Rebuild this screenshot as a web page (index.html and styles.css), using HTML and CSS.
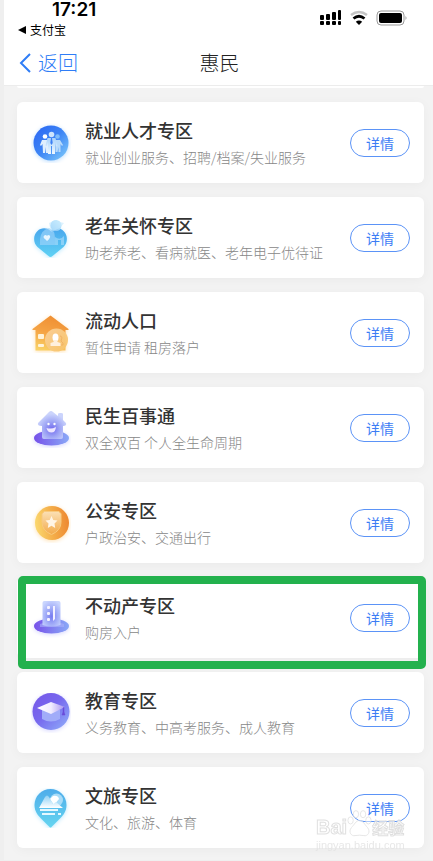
FILE: index.html
```html
<!DOCTYPE html>
<html lang="zh-CN">

<head>
  <meta charset="UTF-8">
  <meta name="viewport" content="width=device-width, initial-scale=1.0">
  <title>惠民</title>
  <link rel="stylesheet" href="styles.css">
</head>

<body>
  <div class="page">
    <header class="header">
      <div class="status-bar">
        <div class="status-left">
          <div class="time">17:21</div>
          <a class="back-app" href="#"><svg width="8" height="8" viewBox="0 0 8 8"><path d="M8 0v8L0 4z" fill="#000"/></svg>支付宝</a>
        </div>
        <svg class="status-icons" width="88" height="18" viewBox="0 0 88 18">
          <g fill="#000">
            <rect x="1" y="6" width="4" height="5" rx="1"/><rect x="7" y="5" width="4" height="6" rx="1"/>
            <rect x="13" y="3" width="4" height="8" rx="1"/><rect x="19" y="1" width="3" height="10" rx="1"/>
            <rect x="1" y="12" width="4" height="4" rx="1"/><rect x="7" y="12" width="4" height="4" rx="1"/>
            <rect x="13" y="12" width="4" height="4" rx="1"/><rect x="19" y="12" width="3" height="4" rx="1"/>
          </g>
          <path d="M32 6q8-6 16 0" fill="none" stroke="#c4c4c4" stroke-width="2.600"/>
          <path d="M34.500 9.500q5.500-4.500 11 0" fill="none" stroke="#000" stroke-width="2.800"/>
          <path d="M36.800 12.700q3.200-2.400 6.400 0L40 16z" fill="#000"/>
          <rect x="58" y="2" width="27" height="14" rx="4" fill="none" stroke="#999"/>
          <rect x="60" y="4" width="23" height="10" rx="2" fill="#000"/>
          <path d="M86.500 7q2 2 0 4z" fill="#999"/>
        </svg>
      </div>
      <nav class="nav">
        <a class="back" href="#"><svg width="12" height="20" viewBox="0 0 12 20"><path d="M11 1L2 10l9 9" fill="none" stroke="#2f7df6" stroke-width="2"/></svg>返回</a>
        <h1>惠民</h1>
      </nav>
    </header>

    <main class="list">
      <div class="card-edge"></div>

      <section class="card">
        <svg class="icon" viewBox="0 0 40 40">
          <defs>
            <linearGradient id="jobBg" x1="0" y1="0" x2="1" y2="1"><stop offset="0" stop-color="#2a64f3"/><stop offset=".5" stop-color="#3e86f5"/><stop offset="1" stop-color="#84d0fb"/></linearGradient>
            <linearGradient id="jobMan" x1="0" y1="0" x2="0" y2="1"><stop offset="0" stop-color="#a9d3fc"/><stop offset="1" stop-color="#f0f8ff"/></linearGradient>
          </defs>
          <circle class="glow-blue" cx="20" cy="20" r="17.500" fill="url(#jobBg)"/>
          <circle cx="14" cy="13.500" r="2.300" fill="#fff"/>
          <circle cx="26.500" cy="13.500" r="2.300" fill="#80bdfa"/>
          <path d="M11 17h6v13h-2v-6l-1 6h-2l-.5-9-1.500 2-1-1z" fill="#e0effe"/>
          <path d="M24 17h5l3 5-1 1-1.500-2v8h-2v-5l-1 5h-2z" fill="#b7dafb"/>
          <circle cx="20.500" cy="11.500" r="2.800" fill="#cde5fd"/>
          <path d="M16.500 15h8l2 8-1.500.5-1-4.500v12h-3v-8h-1v8h-3V19l-1 4-1.500-.5z" fill="url(#jobMan)"/>
          <path d="M20 15h1l.7 5-1.200 2-1.200-2z" fill="#3b7ff4"/>
        </svg>
        <div class="info">
          <h2>就业人才专区</h2>
          <p>就业创业服务、招聘/档案/失业服务</p>
        </div>
        <button class="btn" type="button">详情</button>
      </section>

      <section class="card">
        <svg class="icon" viewBox="0 0 40 40">
          <defs>
            <linearGradient id="heartBg" x1="0" y1="0" x2="0" y2="1"><stop offset="0" stop-color="#48a7ed"/><stop offset="1" stop-color="#60d2f4"/></linearGradient>
            <linearGradient id="heartTop" x1="1" y1="0" x2="0" y2="1"><stop offset="0" stop-color="#d4f2fe"/><stop offset="1" stop-color="#78bff5"/></linearGradient>
          </defs>
          <path class="glow-cyan" d="M19.500 13c4-4 10-3 13 0 5 5 4 12 0 16l-11 9q-2 2-4 0l-11-9c-4-4-5-11 0-16 3-3 9-4 13 0z" fill="url(#heartBg)"/>
          <circle cx="25" cy="7.500" r="5.500" fill="url(#heartTop)"/>
          <path d="M18 5l6-3 5 2 4 1-4 5-9 4z" fill="#c6eafd" opacity=".6"/>
          <path d="M9 27v-6q1-9 9-11 6 2 6 10v7z" fill="#9ed4fb" opacity=".65"/>
          <path d="M24 27v-8q5 4 9-1v9h-3v-5h-3v5z" fill="#aeddfc" opacity=".6"/>
          <path d="M15 17c-3 0-3 3-1 4l2 2c4-3 4-6 1-6l-1 1z" fill="#e8f6ff"/>
        </svg>
        <div class="info">
          <h2>老年关怀专区</h2>
          <p>助老养老、看病就医、老年电子优待证</p>
        </div>
        <button class="btn" type="button">详情</button>
      </section>

      <section class="card">
        <svg class="icon" viewBox="0 0 40 40">
          <defs>
            <linearGradient id="homeBg" x1=".6" y1="0" x2=".3" y2="1"><stop offset="0" stop-color="#ef8e32"/><stop offset=".5" stop-color="#f5a344"/><stop offset="1" stop-color="#f9d166"/></linearGradient>
            <linearGradient id="homeDot" x1="0" y1="0" x2="1" y2="1"><stop offset="0" stop-color="#fad19c"/><stop offset="1" stop-color="#f8c366"/></linearGradient>
          </defs>
          <path class="glow-orange" d="M19.500 2.500l18 13.500v1h-3v20.500h-30V17h-3v-1z" fill="url(#homeBg)"/>
          <rect x="7" y="21" width="6" height="5" rx="1" fill="#fff3d9"/><rect x="7" y="31" width="6" height="3" rx="1" fill="#fff3d9"/>
          <circle cx="25.500" cy="27" r="11.500" fill="url(#homeDot)" opacity=".95"/>
          <ellipse cx="24.500" cy="24.500" rx="3" ry="4" fill="#fff"/>
          <path d="M23 27h3l.5 2 3 1v3h-10v-3l3-1z" fill="#fff0dd"/>
          <path d="M29 23q3 0 1 5l2 2v2h-2" fill="none" stroke="#f0b165"/>
        </svg>
        <div class="info">
          <h2>流动人口</h2>
          <p>暂住申请 租房落户</p>
        </div>
        <button class="btn" type="button">详情</button>
      </section>

      <section class="card">
        <svg class="icon" viewBox="0 0 40 40">
          <defs>
            <linearGradient id="baseBg" x1="0" y1="0" x2="1" y2="0"><stop offset="0" stop-color="#7651e9"/><stop offset="1" stop-color="#8aa9f7"/></linearGradient>
            <radialGradient id="smileBg" cx=".5" cy=".65" r=".55"><stop offset="0" stop-color="#7068ee"/><stop offset=".5" stop-color="#9fa6f5"/><stop offset="1" stop-color="#cbd4fc"/></radialGradient>
          </defs>
          <ellipse class="glow-violet" cx="20.500" cy="30" rx="17.500" ry="7.500" fill="url(#baseBg)"/>
          <path d="M20 3q1 0 2 1l5 4V6q0-1 2-1h1q2 0 2 1v6l3 3q1 3-3 3v11q0 2-2 2H13q-2 0-2-2V18q-5 0-4-3L18 4q1-1 2-1z" fill="url(#smileBg)"/>
          <circle cx="17.500" cy="16" r="1.200" fill="#fff"/><circle cx="23.500" cy="16" r="1.200" fill="#fff"/>
          <path d="M15.500 20q5 1.500 9.500-1-.5 5.500-4.500 5.500T15.500 20z" fill="#eee7ff"/>
        </svg>
        <div class="info">
          <h2>民生百事通</h2>
          <p>双全双百 个人全生命周期</p>
        </div>
        <button class="btn" type="button">详情</button>
      </section>

      <section class="card">
        <svg class="icon" viewBox="0 0 40 40">
          <defs>
            <linearGradient id="policeBg" x1="0" y1=".5" x2="1" y2=".4"><stop offset="0" stop-color="#fbd86f"/><stop offset=".5" stop-color="#f4ad49"/><stop offset="1" stop-color="#ed8831"/></linearGradient>
            <linearGradient id="shield" x1="0" y1="0" x2="0" y2="1"><stop offset="0" stop-color="#fbe0b5"/><stop offset="1" stop-color="#f3aa4a"/></linearGradient>
          </defs>
          <circle class="glow-orange" cx="21" cy="20" r="17" fill="url(#policeBg)"/>
          <path d="M13 8.500h15q1 2 2 2v9q0 8-9.500 12-9.500-4-9.500-12v-9q1 0 2-2z" fill="url(#shield)" stroke="#f8ca7e"/>
          <path d="M20.500 13l1.800 4 4.200.5-3 3 .7 4.500-3.700-2.200-3.700 2.200.7-4.500-3-3 4.200-.5z" fill="#fff5e6"/>
        </svg>
        <div class="info">
          <h2>公安专区</h2>
          <p>户政治安、交通出行</p>
        </div>
        <button class="btn" type="button">详情</button>
      </section>

      <section class="card marked">
        <svg class="icon" viewBox="0 0 40 40">
          <defs>
            <radialGradient id="tower" cx=".5" cy=".6" r=".65"><stop offset="0" stop-color="#777bf0"/><stop offset=".5" stop-color="#a2adf8"/><stop offset="1" stop-color="#c9d5fe"/></radialGradient>
          </defs>
          <ellipse class="glow-violet" cx="20.500" cy="28" rx="17.500" ry="7.500" fill="url(#baseBg)"/>
          <path d="M9 26l3-1h18l3 1v3H9z" fill="#aab0fa" opacity=".6"/>
          <path d="M11.500 5q0-2 2-2h14q2 0 2 2v22q-9 3-18 0z" fill="url(#tower)"/>
          <g fill="#f4f2ff"><rect x="16" y="8" width="3" height="3" rx="1"/><rect x="16" y="14" width="3" height="3" rx="1"/><rect x="16" y="20" width="3" height="3" rx="1"/><path d="M22 8h2v13l-2 2z"/></g>
        </svg>
        <div class="info">
          <h2>不动产专区</h2>
          <p>购房入户</p>
        </div>
        <button class="btn" type="button">详情</button>
      </section>

      <section class="card">
        <svg class="icon" viewBox="0 0 40 40">
          <defs>
            <linearGradient id="eduBg" x1="0" y1="0" x2="1" y2="1"><stop offset="0" stop-color="#7657e8"/><stop offset=".45" stop-color="#7768ee"/><stop offset="1" stop-color="#91b1fa"/></linearGradient>
            <linearGradient id="cap" x1="0" y1="0" x2="1" y2="0"><stop offset="0" stop-color="#fff"/><stop offset=".5" stop-color="#f1edff"/><stop offset="1" stop-color="#a590ef"/></linearGradient>
          </defs>
          <circle class="glow-violet" cx="20" cy="18.500" r="18.500" fill="url(#eduBg)"/>
          <path d="M11 17h18v9q-9 5-18 0z" fill="#a1acf9"/>
          <path d="M6 15l14-6 14 5-14 7z" fill="url(#cap)"/>
          <path d="M32 15v4l-1 3h3l-1-3v-5" fill="#6a4bd9" stroke="#6a4bd9" stroke-width=".5"/>
        </svg>
        <div class="info">
          <h2>教育专区</h2>
          <p>义务教育、中高考服务、成人教育</p>
        </div>
        <button class="btn" type="button">详情</button>
      </section>

      <section class="card">
        <svg class="icon" viewBox="0 0 40 40">
          <defs>
            <linearGradient id="tourBg" x1="0" y1="0" x2="0" y2="1"><stop offset="0" stop-color="#4eacea"/><stop offset="1" stop-color="#65d5f0"/></linearGradient>
            <linearGradient id="hill" x1="0" y1="0" x2="0" y2="1"><stop offset="0" stop-color="#8ed0f5"/><stop offset="1" stop-color="#fff"/></linearGradient>
          </defs>
          <path class="glow-cyan" d="M19.500 1c9 0 16 7 16 16 0 6-3 10-7 14l-8 8q-1 1-2 0l-8-8c-4-4-7-8-7-14 0-9 7-16 16-16z" fill="url(#tourBg)"/>
          <circle cx="25.500" cy="12" r="6.500" fill="#a8dcf8"/>
          <path d="M19 11l3-3q5-1 6 3l-5 6z" fill="#fff"/>
          <path d="M8 20l6-11q2-3 4 0l4 7 3-2 7 6z" fill="url(#hill)"/>
          <path d="M9 22h18M11 26h13M27 26h3" fill="none" stroke="#e5f8ff" stroke-width="2"/>
        </svg>
        <div class="info">
          <h2>文旅专区</h2>
          <p>文化、旅游、体育</p>
        </div>
        <button class="btn" type="button">详情</button>
        <div class="watermark">
          <div class="watermark-logo">
            <span>Bai</span>
            <svg width="25" height="30" viewBox="0 0 28 32">
              <g fill="#fff" fill-opacity=".6" stroke="#dcdcdc">
                <ellipse cx="4" cy="12" rx="3" ry="4"/><ellipse cx="10" cy="5" rx="3" ry="4"/>
                <ellipse cx="18" cy="5" rx="3" ry="4"/><ellipse cx="24" cy="12" rx="3" ry="4"/>
                <path d="M14 12c4 0 6 5 9 8 4 5 0 10-4 9q-5-1-10 0c-4 1-8-4-4-9 3-3 5-8 9-8z"/>
              </g>
              <text x="14" y="27" text-anchor="middle">du</text>
            </svg>
            <span class="watermark-cn">经验</span>
          </div>
          <div class="watermark-url">jingyan.baidu.com</div>
        </div>
      </section>
    </main>
  </div>
</body>

</html>
```
FILE: styles.css
```css
* {
  margin: 0;
  padding: 0;
  box-sizing: border-box;
}

body {
  font-family: 'Noto Sans CJK SC', sans-serif;
  background: #efefef;
}

a {
  color: inherit;
  text-decoration: none;
}

.page {
  margin-left: 4px;
  background: #f3f3f3;
}

.header {
  background: #fff;
  border-bottom: 1px solid #ececec;
}

.status-bar {
  display: flex;
  justify-content: space-between;
  padding: 0 26px 0 14px;
  height: 40px;
  color: #000;
}

.time {
  padding-left: 34px;
  font-family: Inter, sans-serif;
  font-size: 19px;
  font-weight: 600;
  line-height: 20px;
}

.back-app {
  display: flex;
  align-items: center;
  gap: 4px;
  font-size: 12px;
  line-height: 20px;
}

.status-icons {
  margin-top: 9px;
}

.nav {
  display: grid;
  grid-template-columns: 1fr auto 1fr;
  align-items: center;
  height: 45px;
  padding: 0 13px 0 15px;
  font-size: 20px;
  line-height: 28px;
}

.back {
  display: flex;
  align-items: center;
  gap: 7px;
  font-weight: 300;
  color: #2f7df6;
}

.nav h1 {
  font-size: 20px;
  font-weight: 300;
  color: #222;
}

.list {
  display: flex;
  flex-direction: column;
  gap: 14px;
  padding: 0 9px 12px 13px;
}

.card-edge {
  height: 2px;
  background: #fff;
  border-radius: 0 0 6px 6px;
}

.card {
  position: relative;
  display: flex;
  align-items: center;
  min-height: 81px;
  padding: 0 14px;
  background: #fff;
  border-radius: 6px;
  box-shadow: 0 2px 12px rgba(0, 0, 0, 0.04);
}

.marked::after {
  content: '';
  position: absolute;
  inset: -1px -2px -11px 1px;
  border: 8px solid #23b14d;
  border-radius: 5px;
  z-index: 1;
}

.icon {
  flex: none;
  width: 40px;
  height: 40px;
  margin-right: 14px;
}

.glow-blue {
  filter: drop-shadow(0 1px 2px #b9dcff);
}

.glow-cyan {
  filter: drop-shadow(0 1px 2px #bdeaff);
}

.glow-orange {
  filter: drop-shadow(0 1px 2px #ffe0b0);
}

.glow-violet {
  filter: drop-shadow(0 1px 2px #d5d5ff);
}

.info {
  flex: 1;
}

.info h2 {
  font-size: 18px;
  font-weight: 500;
  line-height: 28px;
  color: #333;
}

.info p {
  font-size: 14px;
  font-weight: 300;
  line-height: 26px;
  color: #888;
}

.btn {
  width: 60px;
  height: 28px;
  border: 1px solid #5b93f7;
  border-radius: 14px;
  background: #fff;
  color: #3c7df5;
  font-family: inherit;
  font-size: 14px;
  line-height: 20px;
  cursor: pointer;
}

.watermark {
  position: absolute;
  right: 18px;
  bottom: -3px;
  width: 90px;
  color: #fff;
  white-space: nowrap;
  opacity: 0.8;
  pointer-events: none;
}

.watermark-logo {
  display: flex;
  align-items: flex-end;
  height: 32px;
  font-family: 'Liberation Sans', sans-serif;
  font-size: 20px;
  font-weight: 700;
  line-height: 24px;
  -webkit-text-stroke: 1px #d8d8d8;
}

.watermark-logo svg {
  flex: none;
}

.watermark-logo text {
  font-size: 13px;
  fill: #fff;
}

.watermark-logo .watermark-cn {
  font-family: 'Noto Sans CJK SC', sans-serif;
  font-size: 16px;
}

.watermark-url {
  font-family: 'Liberation Sans', sans-serif;
  font-size: 11px;
  line-height: 12px;
  color: #e2e2e2;
}
```
